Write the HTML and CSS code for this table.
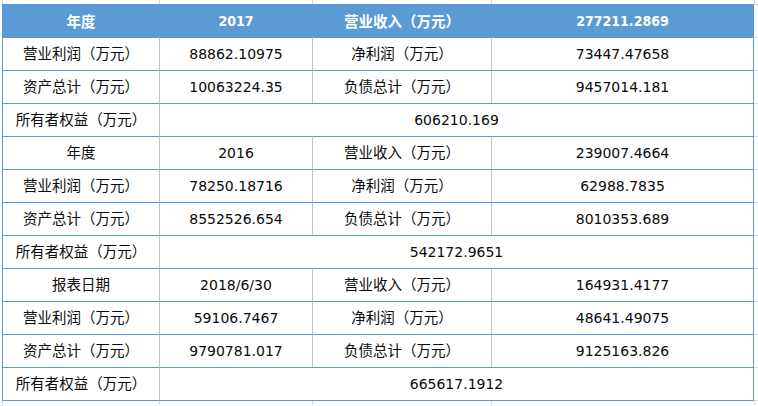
FILE: index.html
```html
<!DOCTYPE html>
<html lang="zh-CN">
<head>
<meta charset="utf-8">
<title>财务数据</title>
<link rel="stylesheet" href="styles.css">
</head>
<body>
<div class="sheet">
  <div class="strip">
    <span class="s1"></span><span class="s2"></span><span class="s3"></span><span class="s4"></span><span class="s5"></span>
  </div>
  <div class="main">
    <table class="fin">
      <colgroup>
        <col class="w1"><col class="w2"><col class="w3"><col class="w4">
      </colgroup>
      <tbody>
        <tr class="head">
          <td class="l">年度</td><td>2017</td><td class="l">营业收入（万元）</td><td>277211.2869</td>
        </tr>
        <tr>
          <td class="l">营业利润（万元）</td><td>88862.10975</td><td class="l">净利润（万元）</td><td>73447.47658</td>
        </tr>
        <tr>
          <td class="l">资产总计（万元）</td><td>10063224.35</td><td class="l">负债总计（万元）</td><td>9457014.181</td>
        </tr>
        <tr>
          <td class="l">所有者权益（万元）</td><td colspan="3">606210.169</td>
        </tr>
        <tr>
          <td class="l">年度</td><td>2016</td><td class="l">营业收入（万元）</td><td>239007.4664</td>
        </tr>
        <tr>
          <td class="l">营业利润（万元）</td><td>78250.18716</td><td class="l">净利润（万元）</td><td>62988.7835</td>
        </tr>
        <tr>
          <td class="l">资产总计（万元）</td><td>8552526.654</td><td class="l">负债总计（万元）</td><td>8010353.689</td>
        </tr>
        <tr>
          <td class="l">所有者权益（万元）</td><td colspan="3">542172.9651</td>
        </tr>
        <tr>
          <td class="l">报表日期</td><td>2018/6/30</td><td class="l">营业收入（万元）</td><td>164931.4177</td>
        </tr>
        <tr>
          <td class="l">营业利润（万元）</td><td>59106.7467</td><td class="l">净利润（万元）</td><td>48641.49075</td>
        </tr>
        <tr>
          <td class="l">资产总计（万元）</td><td>9790781.017</td><td class="l">负债总计（万元）</td><td>9125163.826</td>
        </tr>
        <tr class="last">
          <td class="l">所有者权益（万元）</td><td colspan="3">665617.1912</td>
        </tr>
      </tbody>
    </table>
    <div class="edge"></div>
  </div>
  <div class="strip">
    <span class="s1"></span><span class="s2"></span><span class="s3"></span><span class="s4"></span><span class="s5"></span>
  </div>
</div>
</body>
</html>
```

FILE: styles.css
```css
html, body {
  margin: 0;
  padding: 0;
  background: #ffffff;
}

body {
  width: 758px;
  height: 406px;
  overflow: hidden;
  font-family: "DejaVu Sans", "Noto Sans CJK SC", sans-serif;
  font-size: 14px;
  color: #0a0a0a;
}

.sheet {
  display: flex;
  flex-direction: column;
}

.strip {
  display: flex;
  height: 4px;
  padding-left: 2px;
}

.strip span {
  flex: none;
  box-sizing: border-box;
  border-left: 1px solid #d4d4d4;
  height: 100%;
}

.strip .s1 { width: 157px; }
.strip .s2 { width: 153px; }
.strip .s3 { width: 179px; }
.strip .s4 { width: 263px; }
.strip .s5 { flex: 1; }

.main {
  display: flex;
  align-items: flex-start;
  padding-left: 2px;
}

.fin {
  flex: none;
  width: 752px;
  table-layout: fixed;
  border-collapse: separate;
  border-spacing: 0;
}

.w1 { width: 158px; }
.w2 { width: 153px; }
.w3 { width: 179px; }
.w4 { width: 262px; }

.fin td {
  padding: 0;
  height: 32px;
  border-top: 1px solid #5b9bd5;
  border-right: 1px solid #c4c4c4;
  text-align: center;
  vertical-align: middle;
  white-space: nowrap;
  line-height: 20px;
}

.fin td:first-child {
  border-left: 1px solid #5b9bd5;
}

.fin td:last-child {
  border-right-color: #5b9bd5;
}

.fin td.l {
  font-size: 14.5px;
}

.fin .head td {
  border-top: none;
  height: 33px;
  background: #5b9bd5;
  border-right-color: #5b9bd5;
  color: #ffffff;
  font-family: "DejaVu Sans Condensed", "DejaVu Sans", "Noto Sans CJK SC", sans-serif;
  font-weight: bold;
  font-size: 14px;
}

.fin .head td.l {
  font-family: "Noto Sans CJK SC", sans-serif;
  font-size: 14.5px;
}

.fin .last td {
  border-bottom: 1px solid #5b9bd5;
}

.edge {
  flex: 1;
  height: 397px;
  border-top: 1px solid #dcdcdc;
  box-sizing: border-box;
  background: repeating-linear-gradient(to bottom, transparent 0, transparent 32px, #dcdcdc 32px, #dcdcdc 33px);
}
```
